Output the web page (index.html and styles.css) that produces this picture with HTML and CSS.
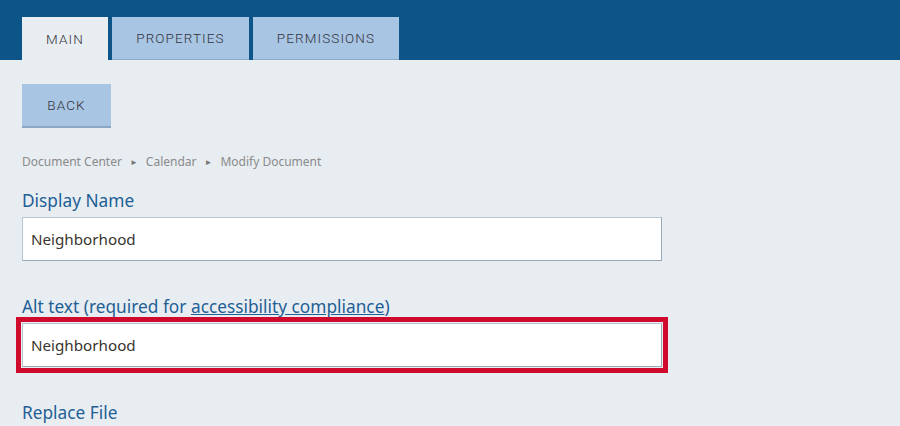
FILE: index.html
```html
<!DOCTYPE html>
<html>
<head>
<meta charset="utf-8">
<link rel="stylesheet" href="styles.css">
</head>
<body>
<header class="topbar">
  <nav class="tabs">
    <a class="tab tab-active">MAIN</a>
    <a class="tab">PROPERTIES</a>
    <a class="tab">PERMISSIONS</a>
  </nav>
</header>
<main class="content">
  <button class="back">BACK</button>
  <div class="crumbs">
    <span>Document Center</span><span class="sep">►</span><span>Calendar</span><span class="sep">►</span><span>Modify Document</span>
  </div>
  <div class="field">
    <label class="label">Display Name</label>
    <div class="input">Neighborhood</div>
  </div>
  <div class="field field-alt">
    <label class="label">Alt text (required for <a class="link">accessibility compliance</a>)</label>
    <div class="input input-focus">Neighborhood</div>
  </div>
  <div class="field field-replace">
    <label class="label">Replace File</label>
  </div>
</main>
</body>
</html>
```
FILE: styles.css
```css
html, body {
  margin: 0;
  padding: 0;
  background: #e8edf2;
  font-family: "Noto Sans", sans-serif;
}
.topbar {
  background: #0d5488;
  height: 60px;
  box-sizing: border-box;
  padding: 17px 0 0 22px;
}
.tabs {
  display: flex;
  gap: 4px;
  height: 43px;
}
.tab {
  display: flex;
  align-items: center;
  justify-content: center;
  box-sizing: border-box;
  height: 43px;
  background: #a8c5e3;
  border-bottom: 1px solid #8eaac8;
  font-family: Roboto, sans-serif;
  font-weight: 300;
  font-size: 13.5px;
  letter-spacing: 1.1px;
  color: #33333b;
  padding: 0 20px;
}
.tab:nth-child(1) { width: 86px; }
.tab:nth-child(2) { width: 137px; }
.tab:nth-child(3) { width: 146px; }
.tab-active {
  background: #e8edf2;
  border-bottom: none;
}
.content {
  padding: 24px 22px 0 22px;
}
.back {
  display: block;
  width: 89px;
  height: 44px;
  box-sizing: border-box;
  background: #a8c5e3;
  border: none;
  border-bottom: 2px solid #8da6c3;
  font-family: Roboto, sans-serif;
  font-weight: 300;
  font-size: 13.5px;
  letter-spacing: 1.1px;
  color: #33333b;
  padding: 0;
  margin: 0;
}
.crumbs {
  margin-top: 25px;
  font-size: 12px;
  color: #8a8a8a;
  line-height: 18px;
  display: flex;
}
.crumbs .sep {
  font-size: 8px;
  margin: 0 8px;
  color: #777;
}
.field {
  margin-top: 19px;
  width: 640px;
}
.label {
  display: block;
  font-size: 17.3px;
  line-height: 22px;
  color: #1f5f95;
  margin-bottom: 5px;
}
.link {
  color: #1f5f95;
  text-decoration: underline;
}
.input {
  box-sizing: border-box;
  height: 44px;
  background: #fff;
  border: 1px solid #b8c6d4;
  border-bottom-color: #9aa9b8;
  border-right-color: #9aa9b8;
  padding: 0 8px;
  display: flex;
  align-items: center;
  font-size: 15.2px;
  color: #3a3530;
}
.field-alt {
  margin-top: 35px;
}
.input-focus {
  outline: 5px solid #cf0a2c;
  outline-offset: 1px;
}
.field-replace {
  margin-top: 35px;
}
```
